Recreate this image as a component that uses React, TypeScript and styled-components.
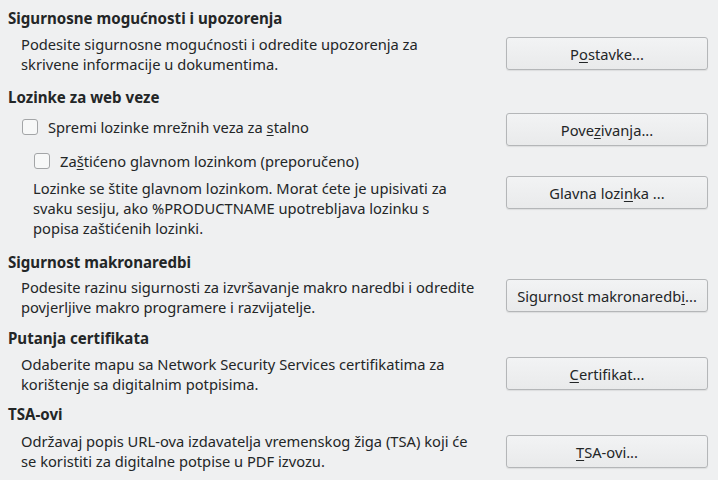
import React from 'react';
import styled, {createGlobalStyle} from 'styled-components';

const GlobalStyle = createGlobalStyle`
    html, body {
        margin: 0;
        padding: 0;
        background-color: #eff0f1;
    }
    body {
        font-family: "Noto Sans", "Open Sans", sans-serif;
        font-size: 14.7px;
        color: #232627;
    }
`

type IndentProps = {
    indent?: number
    width?: number
}

type GapProps = {
    top?: number
}

const StyledPage = styled.div`
    width: 718px;
    height: 480px;
    box-sizing: border-box;
    padding: 8px 10px 0 8px;
    overflow: hidden;
`

const StyledHeading = styled.h2<GapProps>`
    margin: ${props => props.top ?? 0}px 0 0 0;
    font-size: 15.1px;
    font-weight: 700;
    line-height: 20px;
`

const StyledRow = styled.div<GapProps>`
    display: flex;
    align-items: flex-start;
    justify-content: space-between;
    margin-top: ${props => props.top ?? 0}px;
`

const StyledText = styled.p<IndentProps>`
    margin: 0 0 0 ${props => props.indent ?? 13}px;
    width: ${props => props.width ?? 460}px;
    line-height: 20px;
`

const StyledButton = styled.button<GapProps>`
    flex: none;
    width: 202px;
    height: 33px;
    margin-top: ${props => props.top ?? 0}px;
    padding: 0;
    font-family: inherit;
    font-size: 14.7px;
    color: #232627;
    border: 1px solid #b4b6b8;
    border-radius: 3px;
    background: linear-gradient(#f2f3f4, #e9eaeb);
    box-shadow: 0 1px 1px rgba(0, 0, 0, 0.08);
`

const StyledCheckLabel = styled.label<IndentProps & GapProps>`
    display: flex;
    align-items: center;
    gap: 10px;
    margin: ${props => props.top ?? 0}px 0 0 ${props => props.indent ?? 14}px;
    line-height: 20px;
`

const StyledBox = styled.span`
    flex: none;
    width: 14px;
    height: 14px;
    border: 1px solid #a3a5a7;
    border-radius: 3px;
    background: #f7f8f8;
`

const U = styled.span`
    text-decoration: underline;
    text-underline-offset: 2px;
`

export default function App() {
    return (
        <StyledPage>
            <GlobalStyle/>
            <StyledHeading>Sigurnosne mogućnosti i upozorenja</StyledHeading>
            <StyledRow top={6}>
                <StyledText width={440}>Podesite sigurnosne mogućnosti i odredite upozorenja za skrivene informacije u dokumentima.</StyledText>
                <StyledButton top={3}>P<U>o</U>stavke...</StyledButton>
            </StyledRow>

            <StyledHeading top={13}>Lozinke za web veze</StyledHeading>
            <StyledRow top={6}>
                <StyledCheckLabel indent={14} top={4}>
                    <StyledBox/>
                    <span>Spremi lozinke mrežnih veza za <U>s</U>talno</span>
                </StyledCheckLabel>
                <StyledButton>Pove<U>z</U>ivanja...</StyledButton>
            </StyledRow>
            <StyledRow top={5}>
                <StyledCheckLabel indent={26}>
                    <StyledBox/>
                    <span>Za<U>š</U>tićeno glavnom lozinkom (preporučeno)</span>
                </StyledCheckLabel>
            </StyledRow>
            <StyledRow top={7}>
                <StyledText indent={25} width={440}>Lozinke se štite glavnom lozinkom. Morat ćete je upisivati za svaku sesiju, ako %PRODUCTNAME upotrebljava lozinku s popisa zaštićenih lozinki.</StyledText>
                <StyledButton top={-2}>Glavna lozi<U>n</U>ka ...</StyledButton>
            </StyledRow>

            <StyledHeading top={14}>Sigurnost makronaredbi</StyledHeading>
            <StyledRow top={5}>
                <StyledText width={465}>Podesite razinu sigurnosti za izvršavanje makro naredbi i odredite povjerljive makro programere i razvijatelje.</StyledText>
                <StyledButton top={2}>Sigurnost makronaredb<U>i</U>...</StyledButton>
            </StyledRow>

            <StyledHeading top={11}>Putanja certifikata</StyledHeading>
            <StyledRow top={6}>
                <StyledText width={460}>Odaberite mapu sa Network Security Services certifikatima za korištenje sa digitalnim potpisima.</StyledText>
                <StyledButton top={3}><U>C</U>ertifikat...</StyledButton>
            </StyledRow>

            <StyledHeading top={10}>TSA-ovi</StyledHeading>
            <StyledRow top={7}>
                <StyledText width={460}>Održavaj popis URL-ova izdavatelja vremenskog žiga (TSA) koji će se koristiti za digitalne potpise u PDF izvozu.</StyledText>
                <StyledButton top={4}><U>T</U>SA-ovi...</StyledButton>
            </StyledRow>
        </StyledPage>
    )
}
